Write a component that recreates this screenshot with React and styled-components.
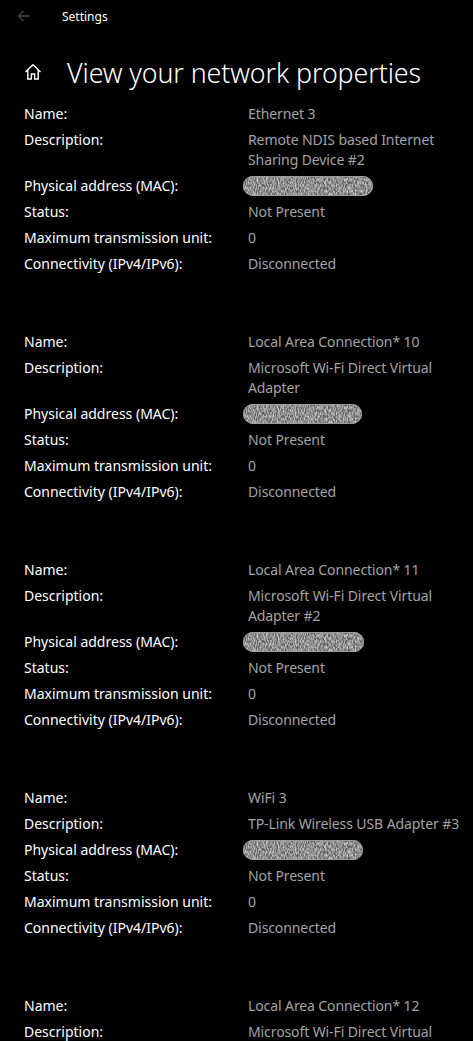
import styled, { createGlobalStyle } from 'styled-components'

const GlobalStyle = createGlobalStyle`
    html, body {
        margin: 0;
        padding: 0;
        background: #000;
    }
    body {
        font-family: 'Noto Sans', 'Open Sans', sans-serif;
        color: #fff;
    }
`

const Page = styled.div`
    width: 473px;
    height: 1041px;
    overflow: hidden;
    background: #000;
`

const TitleBar = styled.div`
    height: 32px;
    display: flex;
    align-items: center;
`

const BackButton = styled.div`
    width: 48px;
    height: 32px;
    display: flex;
    align-items: center;
    justify-content: center;
    color: #6e6e6e;
`

const AppName = styled.span`
    margin-left: 14px;
    font-size: 12px;
    color: #fff;
`

const Heading = styled.div`
    display: flex;
    align-items: center;
    height: 40px;
    margin-top: 20px;
    padding-left: 24px;
`

const HomeIcon = styled.div`
    width: 20px;
    display: flex;
    align-items: center;
    color: #fff;
`

const HeadingText = styled.h1`
    margin: 0 0 0 23px;
    font-size: 26.8px;
    font-weight: 300;
    letter-spacing: -0.1px;
    white-space: nowrap;
`

const List = styled.div`
    padding: 12px 0 0 24px;
`

const Block = styled.div`
    display: flex;
    flex-direction: column;
    gap: 6px;
    margin-bottom: 58px;
`

const Row = styled.div`
    display: grid;
    grid-template-columns: 224px 1fr;
    font-size: 14px;
    line-height: 20px;
`

const Label = styled.span`
    color: #fff;
`

const Value = styled.span`
    color: #a3a3a3;
    letter-spacing: -0.1px;
`

function Scribble({ width }) {
    return (
        <svg width={width} height='20' style={{ display: 'block', marginLeft: -6 }}>
            <defs>
                <filter id='noise' x='0' y='0' width='100%' height='100%'>
                    <feTurbulence type='fractalNoise' baseFrequency='0.9 0.35' numOctaves='2' seed='3' />
                    <feColorMatrix type='matrix' values='0 0 0 0 0.55  0 0 0 0 0.55  0 0 0 0 0.55  0 0 0 2.2 -0.6' />
                    <feComposite in2='SourceGraphic' operator='in' />
                </filter>
            </defs>
            <rect x='1' y='0' width={width - 2} height='20' rx='10' fill='#5a5a5a' />
            <rect x='1' y='0' width={width - 2} height='20' rx='10' fill='#fff' filter='url(#noise)' />
            <rect x='1.5' y='0.5' width={width - 3} height='19' rx='9.5' fill='none' stroke='#9a9a9a' strokeWidth='1' />
        </svg>
    )
}

const adapters = [
    { name: 'Ethernet 3', desc: ['Remote NDIS based Internet', 'Sharing Device #2'], mac: 132 },
    { name: 'Local Area Connection* 10', desc: ['Microsoft Wi-Fi Direct Virtual', 'Adapter'], mac: 121 },
    { name: 'Local Area Connection* 11', desc: ['Microsoft Wi-Fi Direct Virtual', 'Adapter #2'], mac: 123 },
    { name: 'WiFi 3', desc: ['TP-Link Wireless USB Adapter #3'], mac: 122 },
    { name: 'Local Area Connection* 12', desc: ['Microsoft Wi-Fi Direct Virtual', 'Adapter'], mac: 121 },
]

export default function App() {
    return (
        <Page>
            <GlobalStyle />
            <TitleBar>
                <BackButton>
                    <svg width='14' height='12' viewBox='0 0 14 12' fill='none' stroke='currentColor' strokeWidth='1'>
                        <path d='M13 6H1.5M6.5 1L1.5 6l5 5' />
                    </svg>
                </BackButton>
                <AppName>Settings</AppName>
            </TitleBar>
            <Heading>
                <HomeIcon>
                    <svg width='18' height='18' viewBox='0 0 18 18' fill='none' stroke='currentColor' strokeWidth='1.4' strokeLinejoin='miter'>
                        <path d='M1.5 9L9 1.8 16.5 9' />
                        <path d='M3.8 7v9h3.6v-5h3.2v5h3.6V7' />
                    </svg>
                </HomeIcon>
                <HeadingText>View your network properties</HeadingText>
            </Heading>
            <List>
                {adapters.map((a, i) => (
                    <Block key={i}>
                        <Row>
                            <Label>Name:</Label>
                            <Value>{a.name}</Value>
                        </Row>
                        <Row>
                            <Label>Description:</Label>
                            <Value>
                                {a.desc.map((d, j) => (
                                    <div key={j}>{d}</div>
                                ))}
                            </Value>
                        </Row>
                        <Row>
                            <Label>Physical address (MAC):</Label>
                            <Scribble width={a.mac} />
                        </Row>
                        <Row>
                            <Label>Status:</Label>
                            <Value>Not Present</Value>
                        </Row>
                        <Row>
                            <Label>Maximum transmission unit:</Label>
                            <Value>0</Value>
                        </Row>
                        <Row>
                            <Label>Connectivity (IPv4/IPv6):</Label>
                            <Value>Disconnected</Value>
                        </Row>
                    </Block>
                ))}
            </List>
        </Page>
    )
}
